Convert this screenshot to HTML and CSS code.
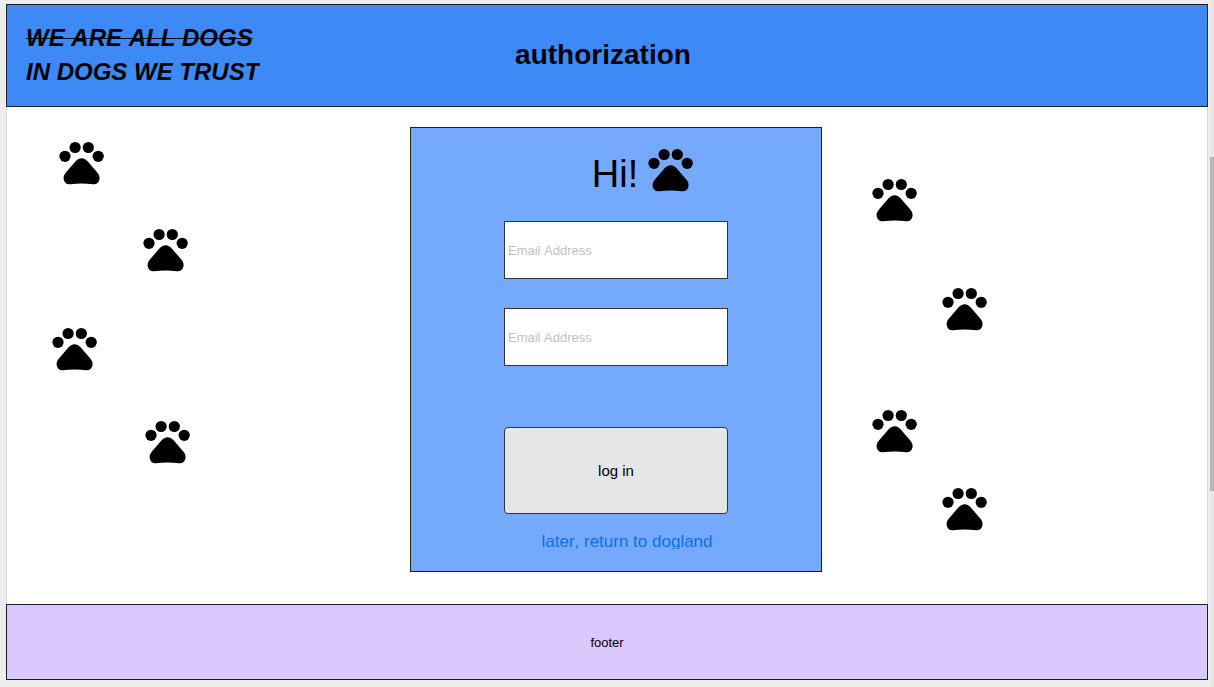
FILE: index.html
```
<!DOCTYPE html>
<html lang="en">
<head>
<meta charset="utf-8">
<meta name="viewport" content="width=device-width, initial-scale=1">
<title>authorization</title>
<link rel="stylesheet" href="styles.css">
</head>
<body>
<svg class="symbols" aria-hidden="true">
  <symbol id="paw" viewBox="0 0 46 44">
    <circle cx="6" cy="15.3" r="5.6"/>
    <circle cx="16.1" cy="6.5" r="5.6"/>
    <circle cx="29.3" cy="6.5" r="5.6"/>
    <circle cx="39.2" cy="15.3" r="5.6"/>
    <path d="M22.6 17.2C25.200 17.2 27.200 18.500 28.800 20.400L38.500 31.800C40.400 34.100 40.800 36 40.500 38.200C40 41.600 37.300 43.700 34.200 43.300C26 42.300 19.200 42.300 11 43.300C7.900 43.700 5.200 41.600 4.700 38.200C4.400 36 4.800 34.100 6.700 31.800L16.400 20.400C18 18.500 20 17.2 22.6 17.2Z"/>
  </symbol>
</svg>
<div class="page">
  <header class="header">
    <div class="brand">
      <p class="motto motto-old">WE ARE ALL DOGS</p>
      <p class="motto">IN DOGS WE TRUST</p>
    </div>
    <h1 class="title">authorization</h1>
  </header>
  <main class="main">
    <div class="trail trail-left" aria-hidden="true">
      <svg class="paw paw-1"><use href="#paw"/></svg>
      <svg class="paw paw-2"><use href="#paw"/></svg>
      <svg class="paw paw-3"><use href="#paw"/></svg>
      <svg class="paw paw-4"><use href="#paw"/></svg>
    </div>
    <form class="card">
      <h2 class="greeting">Hi! <svg class="paw-icon" aria-hidden="true"><use href="#paw"/></svg></h2>
      <input class="field" type="email" placeholder="Email Address" aria-label="Email Address">
      <input class="field" type="text" placeholder="Email Address" aria-label="Email Address, second field">
      <button class="login" type="button">log in</button>
      <a class="later" href="#">later, return to dogland</a>
    </form>
    <div class="trail trail-right" aria-hidden="true">
      <svg class="paw paw-5"><use href="#paw"/></svg>
      <svg class="paw paw-6"><use href="#paw"/></svg>
      <svg class="paw paw-7"><use href="#paw"/></svg>
      <svg class="paw paw-8"><use href="#paw"/></svg>
    </div>
  </main>
  <footer class="footer">footer</footer>
</div>
<div class="scrollbar" aria-hidden="true"><div class="thumb"></div></div>
</body>
</html>
```
FILE: styles.css
```
* { box-sizing: border-box; }

body {
  margin: 0;
  background: #ededed;
  color: #000;
  font-family: "Liberation Sans", Arial, sans-serif;
  font-kerning: none;
}

.symbols { position: absolute; width: 0; height: 0; }

.page { padding: 4px 6px 7px; }

.header {
  display: grid;
  grid-template-columns: 234px 1fr 234px;
  align-items: center;
  padding: 16px 27px 17px 19px;
  border: 1px solid #1c2026;
  background: #3d8af7;
}

.brand { overflow: hidden; }

.motto {
  margin: 0;
  font-size: 24px;
  font-weight: bold;
  font-style: italic;
  line-height: 34px;
  white-space: nowrap;
}

.motto-old { text-decoration: line-through 1px; }

.title {
  margin: 0;
  font-size: 28px;
  line-height: 32px;
  text-align: center;
}

.main {
  display: grid;
  grid-template-columns: 1fr 412px 1fr;
  padding: 20px 0 32px 18px;
  border: solid #d9d9d9;
  border-width: 0 1px;
  background: #fff;
}

.trail { position: relative; }

.paw { position: absolute; width: 46px; height: 44px; }

.paw-1 { left: 34px; top: 14px; }
.paw-2 { left: 118px; top: 101px; }
.paw-3 { left: 27px; top: 200px; }
.paw-4 { left: 120px; top: 293px; }
.paw-5 { left: 50px; top: 51px; }
.paw-6 { left: 120px; top: 160px; }
.paw-7 { left: 50px; top: 282px; }
.paw-8 { left: 120px; top: 360px; }

.card {
  display: flex;
  flex-direction: column;
  align-items: center;
  padding: 20px 0 22px;
  border: 1px solid #1c2026;
  background: #75a9fb;
}

.greeting {
  display: flex;
  gap: 10px;
  margin: 0 0 21px;
  padding-left: 54px;
  font-size: 38px;
  font-weight: normal;
  line-height: 52px;
}

.greeting .paw-icon { width: 46px; height: 44px; }

.field,
.login {
  width: 224px;
  border: 1px solid #333;
  font-family: inherit;
  font-kerning: inherit;
}

.field {
  height: 58px;
  margin: 0 0 29px;
  padding: 0 3px;
  background: #fff;
  font-size: 13px;
}

.field::placeholder { color: #bfbfbf; }

.login {
  height: 87px;
  margin: 32px 0 18px;
  border-radius: 4px;
  background: #e6e6e6;
  color: #000;
  font-size: 15px;
}

.later {
  height: 17px;
  margin-left: 22px;
  overflow: hidden;
  color: #0b70eb;
  font-size: 17px;
  line-height: 20px;
  text-decoration: none;
}

.footer {
  padding: 30px 0 29px;
  border: 1px solid #1f1a2b;
  background: #dac9fc;
  font-size: 13px;
  line-height: 15px;
  text-align: center;
}

.scrollbar {
  position: absolute;
  top: 0;
  right: 0;
  width: 4px;
  height: 100%;
  background: #e6e6e6;
}

.thumb {
  height: 334px;
  margin-top: 157px;
  background: #b8b8b8;
}
```
